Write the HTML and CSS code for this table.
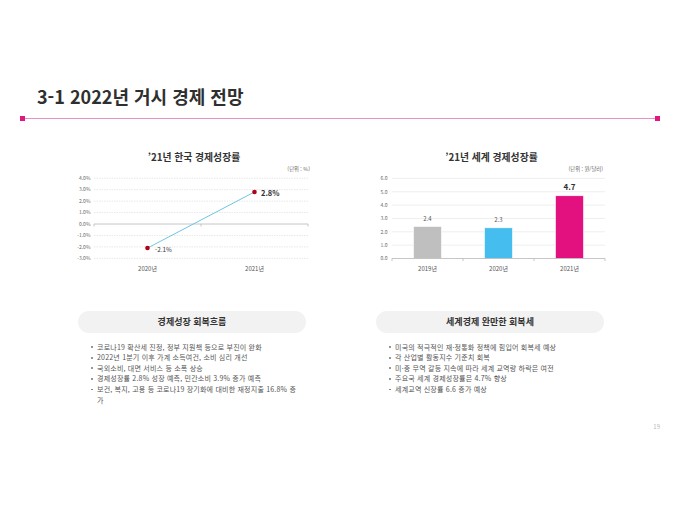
FILE: index.html
```html
<!DOCTYPE html>
<html lang="ko">
<head>
<meta charset="utf-8">
<title>3-1 2022년 거시 경제 전망</title>
<link rel="stylesheet" href="styles.css">
</head>
<body>
<div class="page">
  <h1 class="title">3-1 2022년 거시 경제 전망</h1>
  <div class="rule"><span class="sq"></span><span class="line"></span><span class="sq"></span></div>

  <div class="charts">
    <svg class="chart" width="250" height="135" viewBox="0 0 250 135">
      <text class="ct" x="124" y="16">’21년 한국 경제성장률</text>
      <text class="unit" x="240" y="26">(단위 : %)</text>
      <g class="grid-dash">
        <line x1="24" x2="238" y1="33.2" y2="33.2"/>
        <line x1="24" x2="238" y1="44.65" y2="44.65"/>
        <line x1="24" x2="238" y1="56.1" y2="56.1"/>
        <line x1="24" x2="238" y1="67.55" y2="67.55"/>
        <line x1="24" x2="238" y1="90.45" y2="90.45"/>
        <line x1="24" x2="238" y1="101.9" y2="101.9"/>
        <line x1="24" x2="238" y1="113.35" y2="113.35"/>
      </g>
      <g class="axis">
        <line x1="24" x2="238" y1="79" y2="79"/>
        <line x1="24" x2="24" y1="79" y2="81.5"/>
        <line x1="131" x2="131" y1="79" y2="81.5"/>
        <line x1="238" x2="238" y1="79" y2="81.5"/>
      </g>
      <g class="ylab">
        <text x="20.5" y="35">4.0%</text>
        <text x="20.5" y="46.45">3.0%</text>
        <text x="20.5" y="57.9">2.0%</text>
        <text x="20.5" y="69.35">1.0%</text>
        <text x="20.5" y="80.8">0.0%</text>
        <text x="20.5" y="92.25">-1.0%</text>
        <text x="20.5" y="103.7">-2.0%</text>
        <text x="20.5" y="115.15">-3.0%</text>
      </g>
      <line class="trend" x1="77.5" y1="103.05" x2="184.5" y2="46.94"/>
      <circle class="dot" cx="77.5" cy="103.05" r="2.3"/>
      <circle class="dot" cx="184.5" cy="46.94" r="2.3"/>
      <text class="val" x="85" y="107">-2.1%</text>
      <text class="val big" x="191" y="51">2.8%</text>
      <text class="xlab" x="77.5" y="126">2020년</text>
      <text class="xlab" x="184.5" y="126">2021년</text>
    </svg>

    <svg class="chart" width="250" height="135" viewBox="0 0 250 135">
      <text class="ct" x="121.5" y="16">’21년 세계 경제성장률</text>
      <text class="unit" x="233" y="26">(단위 : 원/달러)</text>
      <g class="grid">
        <line x1="22" x2="235" y1="33.4" y2="33.4"/>
        <line x1="22" x2="235" y1="46.75" y2="46.75"/>
        <line x1="22" x2="235" y1="60.1" y2="60.1"/>
        <line x1="22" x2="235" y1="73.45" y2="73.45"/>
        <line x1="22" x2="235" y1="86.8" y2="86.8"/>
        <line x1="22" x2="235" y1="100.15" y2="100.15"/>
      </g>
      <g class="ylab">
        <text x="17.5" y="35.2">6.0</text>
        <text x="17.5" y="48.55">5.0</text>
        <text x="17.5" y="61.9">4.0</text>
        <text x="17.5" y="75.25">3.0</text>
        <text x="17.5" y="88.6">2.0</text>
        <text x="17.5" y="101.95">1.0</text>
        <text x="17.5" y="115.3">0.0</text>
      </g>
      <rect class="bar gray" x="43.5" y="81.46" width="28" height="32.04"/>
      <rect class="bar blue" x="114.5" y="82.8" width="28" height="30.7"/>
      <rect class="bar pink" x="185.5" y="50.76" width="28" height="62.74"/>
      <g class="axis">
        <line x1="22" x2="235" y1="113.5" y2="113.5"/>
        <line x1="22" x2="22" y1="113.5" y2="116"/>
        <line x1="93" x2="93" y1="113.5" y2="116"/>
        <line x1="164" x2="164" y1="113.5" y2="116"/>
        <line x1="235" x2="235" y1="113.5" y2="116"/>
      </g>
      <text class="bval" x="57.5" y="76">2.4</text>
      <text class="bval" x="128.5" y="77">2.3</text>
      <text class="bval big" x="199.5" y="44.7">4.7</text>
      <text class="xlab" x="57.5" y="126">2019년</text>
      <text class="xlab" x="128.5" y="126">2020년</text>
      <text class="xlab" x="199.5" y="126">2021년</text>
    </svg>
  </div>

  <div class="sections">
    <section class="col col-left">
      <div class="pill">경제성장 회복흐름</div>
      <ul class="list">
        <li>코로나19 확산세 진정, 정부 지원책 등으로 부진이 완화</li>
        <li>2022년 1분기 이후 가계 소득여건, 소비 심리 개선</li>
        <li>국외소비, 대면 서비스 등 소폭 상승</li>
        <li>경제성장률 2.8% 성장 예측, 민간소비 3.9% 증가 예측</li>
        <li>보건, 복지, 고용 등 코로나19 장기화에 대비한 재정지출 16.8% 증가</li>
      </ul>
    </section>
    <section class="col col-right">
      <div class="pill">세계경제 완만한 회복세</div>
      <ul class="list">
        <li>미국의 적극적인 재·정통화 정책에 힘입어 회복세 예상</li>
        <li>각 산업별 활동지수 기준치 회복</li>
        <li>미·중 무역 갈등 지속에 따라 세계 교역량 하락은 여전</li>
        <li>주요국 세계 경제성장률은 4.7% 향상</li>
        <li>세계교역 신장률 6.6 증가 예상</li>
      </ul>
    </section>
  </div>

  <div class="pageno">19</div>
</div>
</body>
</html>
```

FILE: styles.css
```css
* { box-sizing: border-box; }

html, body {
  margin: 0;
  padding: 0;
  background: #ffffff;
}

body {
  font-family: "Noto Sans CJK KR", "Noto Sans", sans-serif;
  color: #333333;
}

.page {
  width: 680px;
  height: 510px;
  overflow: hidden;
}

.title {
  margin: 0;
  padding: 85px 0 0 37px;
  font-size: 18px;
  line-height: 22px;
  font-weight: 700;
  color: #2f2f2f;
}

.rule {
  display: flex;
  align-items: center;
  height: 5px;
  margin: 8.5px 20px 0 20px;
}

.rule .sq {
  width: 5px;
  height: 5px;
  background: #e0187f;
  flex: none;
}

.rule .line {
  flex: 1;
  height: 1px;
  background: #e692c8;
}

.charts {
  display: flex;
  gap: 50px;
  margin-top: 24.5px;
  padding-left: 70px;
  height: 135px;
}

.chart {
  display: block;
  flex: none;
}

.chart text {
  font-family: "Noto Sans CJK KR", "Noto Sans", sans-serif;
}

.chart .ct {
  font-size: 9.8px;
  font-weight: 700;
  fill: #333333;
  text-anchor: middle;
}

.chart .unit {
  font-size: 5.3px;
  fill: #666666;
  text-anchor: end;
}

.chart .ylab text {
  font-size: 5px;
  fill: #666666;
  text-anchor: end;
}

.chart .grid-dash line {
  stroke: #d6d6d6;
  stroke-width: 0.6;
  stroke-dasharray: 1.5 1;
}

.chart .grid line {
  stroke: #e3e3e3;
  stroke-width: 0.6;
}

.chart .axis line {
  stroke: #b8b8b8;
  stroke-width: 0.8;
}

.chart .trend {
  stroke: #6fc5e3;
  stroke-width: 1;
}

.chart .dot {
  fill: #b00018;
}

.chart .val {
  font-size: 6.3px;
  fill: #333333;
}

.chart .val.big {
  font-size: 7.5px;
  font-weight: 700;
}

.chart .xlab {
  font-size: 6px;
  fill: #555555;
  text-anchor: middle;
}

.chart .bar {
  stroke: #ffffff;
  stroke-width: 0.6;
}

.chart .bar.gray { fill: #bfbfbf; }
.chart .bar.blue { fill: #45bdee; }
.chart .bar.pink { fill: #e3107f; }

.chart .bval {
  font-size: 6px;
  fill: #555555;
  text-anchor: middle;
}

.chart .bval.big {
  font-size: 8px;
  font-weight: 700;
  fill: #333333;
}

.sections {
  display: flex;
  gap: 70px;
  margin-top: 31px;
  padding-left: 78px;
}

.col {
  width: 228px;
  flex: none;
}

.pill {
  height: 22px;
  border-radius: 11px;
  background: #f2f2f2;
  font-size: 9px;
  line-height: 22px;
  font-weight: 700;
  text-align: center;
  color: #333333;
}

.list {
  list-style: none;
  margin: 8.7px 0 0 0;
  padding: 0 7px 0 19px;
  font-size: 7px;
  letter-spacing: 0.2px;
  line-height: 10.6px;
  color: #555555;
  word-break: break-all;
}

.list li {
  position: relative;
}

.list li::before {
  content: "";
  position: absolute;
  left: -6px;
  top: 4.6px;
  width: 1.8px;
  height: 1.8px;
  border-radius: 50%;
  background: #777777;
}

.pageno {
  margin-top: 18px;
  padding-right: 20px;
  text-align: right;
  font-size: 6px;
  line-height: 8px;
  color: #bbbbbb;
}
```
